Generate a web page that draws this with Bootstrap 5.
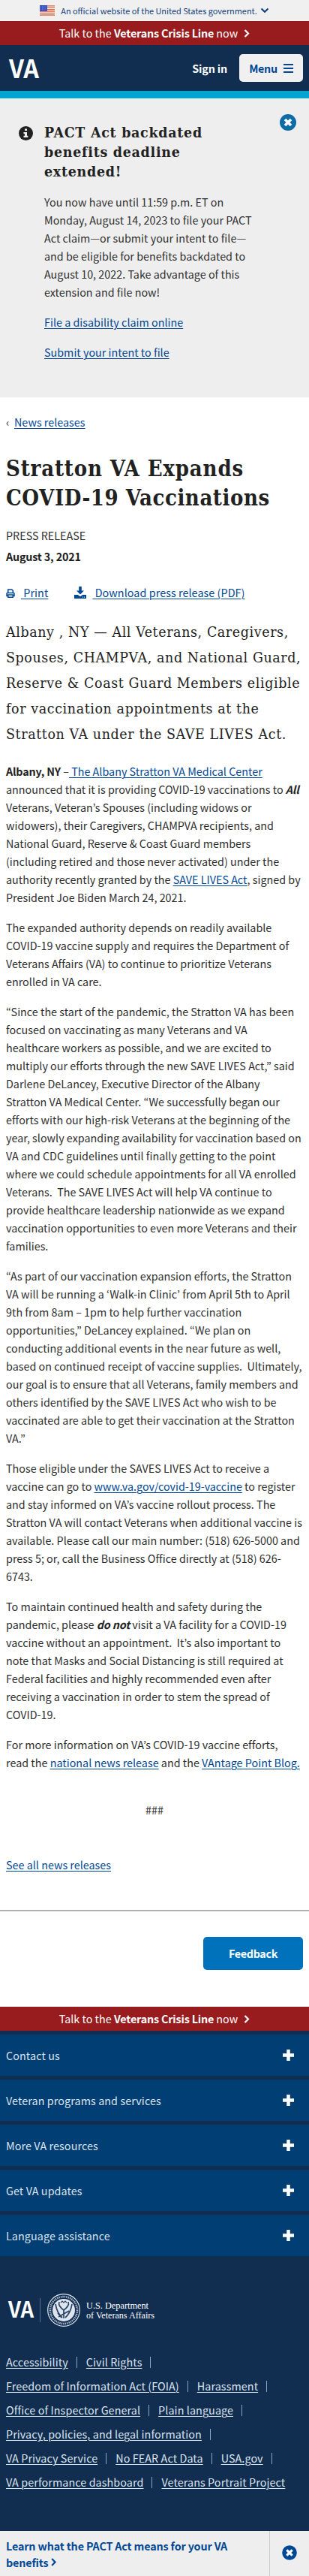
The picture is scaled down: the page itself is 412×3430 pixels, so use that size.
<!DOCTYPE html>
<html lang="en">
<head>
<meta charset="utf-8">
<meta name="viewport" content="width=device-width, initial-scale=1">
<title>Stratton VA Expands COVID-19 Vaccinations</title>
<link href="https://cdn.jsdelivr.net/npm/bootstrap@5.3.0/dist/css/bootstrap.min.css" rel="stylesheet">
<style>
body{font-family:"Noto Sans CJK KR","Noto Sans",sans-serif;font-size:14.32px;line-height:24px;letter-spacing:.02px;color:#2e2e2e;background:#fff;overflow-x:hidden}
a{color:#004795;text-decoration:underline;text-underline-offset:2px;text-decoration-thickness:1px}
svg{display:block;flex:none;overflow:visible;letter-spacing:0}
p{margin-bottom:16px}
strong{font-weight:700;color:#212121;letter-spacing:-.16px}
.slab{font-family:"DejaVu Serif Condensed","DejaVu Serif",serif;font-stretch:condensed;color:#212121}
.gov-bar{height:28px;background:#f0f0f0;font-size:10.9px;letter-spacing:0;color:#123e7c}
.crisis{height:32px;background:#981b1e;color:#fff}
.crisis strong{color:#fff}
.navy{background:#112e51}
.site-head{height:61px;padding:0 8px 0 12px}
.btn-menu{width:85px;height:37px;background:#f0f0f0;color:#004795;border-radius:5px;font-weight:700;letter-spacing:-.3px}
.cyan-rule{height:10px;background:#00a6d2}
.promo{background:#eee;height:398px;padding:33px 60px 0 25px}
.promo h2{font-size:19.4px;line-height:26px;letter-spacing:.74px;font-weight:700;margin:0 0 15px;white-space:nowrap}
.promo .info-dot{margin:4px 15px 0 0}
.promo .close-x{right:17px;top:21px}
.crumb{padding-top:21px}
.crumb-mark{width:11px}
.title{font-size:29px;line-height:39px;letter-spacing:.56px;font-weight:700;white-space:nowrap;margin:31px 0 0}
.title .first-line{letter-spacing:.85px}
.kicker{margin-top:18px}
.dateline{margin-top:4px}
.tools{margin-top:24px;letter-spacing:.08px}
.tools .print{margin:7px 8px 0 0}
.tools .dl{margin:4px 8px 0 35px}
.intro{font-size:19.4px;line-height:34px;letter-spacing:.62px;white-space:nowrap;margin:24px 0 20px}
.story{white-space:nowrap}
.hashes{margin-top:39px}
.see-all{margin-top:49px}
.rule{margin-top:48px;height:2px;background:#aeb0b5}
.feed{padding:34px 8px 49px}
.btn-feed{width:133px;height:44px;background:#0071bb;color:#fff;font-weight:700;letter-spacing:-.3px;border-radius:5px}
.acc-item{height:60px;border-top:5px solid #112e51;background:#003e73;color:#dce4ef;letter-spacing:.1px;padding:0 20px 0 8px}
.foot-logo{margin:50px 0 31px 11px}
.foot-links{line-height:32px;letter-spacing:.1px;padding:0 8px 49px}
.foot-links a{color:#dce4ef}
.foot-links .bar{width:1px;height:15px;background:#8ba6ca;margin:0 12px 0 11px}
.bottom-bar{height:60px;background:#eee;color:#004795;font-weight:700;letter-spacing:-.14px;line-height:21.6px}
.bottom-bar .learn{padding:9px 0 0 8px}
.bottom-bar .side{width:53px;border-left:1px solid #ccc;padding:19px 0 0 16px}
</style>
</head>
<body>
<header>
  <div class="gov-bar d-flex align-items-center justify-content-center">
    <svg width="20" height="14" viewBox="0 0 20 14"><rect width="20" height="14" fill="#fff"/><path d="M0 .8h20M0 3.200h20M0 5.600h20M0 8h20M0 10.400h20M0 13h20" stroke="#e0603c" stroke-width="1.3"/><rect width="10" height="8" fill="#2f49c0"/><path d="M1 2h8M1 4h8M1 6h8" stroke="#b9c4f3" stroke-width=".8" stroke-dasharray="1 1.2"/></svg>
    <span class="text-nowrap ms-2">An official website of the United States government.</span>
    <svg class="ms-1" width="12" height="8" viewBox="0 0 12 8"><path d="M1.500 1.500 6 5.800l4.500-4.300" fill="none" stroke="#123e7c" stroke-width="2.100"/></svg>
  </div>
  <div class="crisis d-flex align-items-center justify-content-center">
    <span>Talk to the <strong>Veterans Crisis Line</strong> now</span>
    <svg class="ms-2" width="8" height="12" viewBox="0 0 8 12"><path d="M1.500 2 6 6.500 1.500 11" fill="none" stroke="#fff" stroke-width="2.200"/></svg>
  </div>
  <div class="site-head navy d-flex align-items-center">
    <svg width="42" height="36" viewBox="0 0 42 36"><text x="0" y="30.500" font-size="33.700" font-weight="700" fill="#fff" textLength="40" lengthAdjust="spacingAndGlyphs">VA</text></svg>
    <strong class="text-white ms-auto me-3">Sign in</strong>
    <div class="btn-menu d-flex align-items-center justify-content-center">Menu
      <svg class="ms-2" width="13" height="12" viewBox="0 0 13 12"><path d="M0 1h13M0 6h13M0 11h13" stroke="#004795" stroke-width="2"/></svg>
    </div>
  </div>
  <div class="cyan-rule"></div>
</header>

<section class="promo d-flex position-relative">
  <svg class="info-dot" width="19" height="19" viewBox="0 0 19 19"><circle cx="9.500" cy="9.500" r="9.500" fill="#212121"/><path d="M8 3.500h3v2.500h-3zM6.500 8H11v4.800h1.300V15H6.500v-2.200H8v-2.600H6.500z" fill="#eee"/></svg>
  <div>
    <h2 class="slab">PACT Act backdated<br>benefits deadline<br>extended!</h2>
    <p class="text-nowrap">You now have until 11:59 p.m. ET on<br>Monday, August 14, 2023 to file your PACT<br>Act claim—or submit your intent to file—<br>and be eligible for benefits backdated to<br>August 10, 2022. Take advantage of this<br>extension and file now!</p>
    <p><a href="#">File a disability claim online</a></p>
    <p><a href="#">Submit your intent to file</a></p>
  </div>
  <svg class="close-x position-absolute" width="22" height="22" viewBox="0 0 22 22"><circle cx="11" cy="11" r="11" fill="#0d6ba8"/><path d="m7 7 8 8M15 7l-8 8" stroke="#fff" stroke-width="3.600"/></svg>
</section>

<main>
  <div class="px-2">
  <div class="crumb d-flex"><span class="crumb-mark">‹</span><a href="#">News releases</a></div>
  <h1 class="slab title"><span class="first-line">Stratton VA Expands</span><br>COVID-19 Vaccinations</h1>
  <div class="kicker">PRESS RELEASE</div>
  <div class="dateline"><strong>August 3, 2021</strong></div>
  <div class="tools d-flex">
    <svg class="print" width="12" height="12" viewBox="0 0 12 12"><path d="M2.800 5V1h5l1.500 1.500V5M1 9.500V6.300q0-.9.900-.9h8.200q.9 0 .9.900v3.200H9.200V8H2.800v1.500zM2.800 8v3.200h6.400V8" fill="none" stroke="#004795" stroke-width="1.500"/></svg>
    <a href="#">&nbsp;Print</a>
    <svg class="dl" width="16" height="16" viewBox="0 0 16 16"><path d="M6.200 0h3.600v5.500H13L8 10.500l-5-5h3.200zM0 11h4.800L8 13.200 11.200 11H16v5H0z" fill="#004795"/><path d="M11 14h1M13 14h1" stroke="#fff"/></svg>
    <a href="#">&nbsp;Download press release (PDF)</a>
  </div>
  <p class="slab intro">Albany , NY — All Veterans, Caregivers,<br>Spouses, CHAMPVA, and National Guard,<br>Reserve &amp; Coast Guard Members eligible<br>for vaccination appointments at the<br>Stratton VA under the SAVE LIVES Act.</p>
  <article class="story">
    <p><strong>Albany, NY</strong> –<a href="#">&nbsp;The Albany Stratton VA Medical Center</a><br>
    announced that it is providing COVID-19 vaccinations to <strong><em>All</em></strong><br>
    Veterans, Veteran’s Spouses (including widows or<br>
    widowers), their Caregivers, CHAMPVA recipients, and<br>
    National Guard, Reserve &amp; Coast Guard members<br>
    (including retired and those never activated) under the<br>
    authority recently granted by the <a href="#">SAVE LIVES Act</a>, signed by<br>
    President Joe Biden March 24, 2021.</p>
    <p>The expanded authority depends on readily available<br>
    COVID-19 vaccine supply and requires the Department of<br>
    Veterans Affairs (VA) to continue to prioritize Veterans<br>
    enrolled in VA care.</p>
    <p>“Since the start of the pandemic, the Stratton VA has been<br>
    focused on vaccinating as many Veterans and VA<br>
    healthcare workers as possible, and we are excited to<br>
    multiply our efforts through the new SAVE LIVES Act,” said<br>
    Darlene DeLancey, Executive Director of the Albany<br>
    Stratton VA Medical Center. “We successfully began our<br>
    efforts with our high-risk Veterans at the beginning of the<br>
    year, slowly expanding availability for vaccination based on<br>
    VA and CDC guidelines until finally getting to the point<br>
    where we could schedule appointments for all VA enrolled<br>
    Veterans.&nbsp; The SAVE LIVES Act will help VA continue to<br>
    provide healthcare leadership nationwide as we expand<br>
    vaccination opportunities to even more Veterans and their<br>
    families.</p>
    <p>“As part of our vaccination expansion efforts, the Stratton<br>
    VA will be running a ‘Walk-in Clinic’ from April 5th to April<br>
    9th from 8am – 1pm to help further vaccination<br>
    opportunities,” DeLancey explained. “We plan on<br>
    conducting additional events in the near future as well,<br>
    based on continued receipt of vaccine supplies.&nbsp; Ultimately,<br>
    our goal is to ensure that all Veterans, family members and<br>
    others identified by the SAVE LIVES Act who wish to be<br>
    vaccinated are able to get their vaccination at the Stratton<br>
    VA.”</p>
    <p>Those eligible under the SAVES LIVES Act to receive a<br>
    vaccine can go to <a href="#">www.va.gov/covid-19-vaccine</a> to register<br>
    and stay informed on VA’s vaccine rollout process. The<br>
    Stratton VA will contact Veterans when additional vaccine is<br>
    available. Please call our main number: (518) 626-5000 and<br>
    press 5; or, call the Business Office directly at (518) 626-<br>
    6743.</p>
    <p>To maintain continued health and safety during the<br>
    pandemic, please <strong><em>do not</em></strong> visit a VA facility for a COVID-19<br>
    vaccine without an appointment.&nbsp; It’s also important to<br>
    note that Masks and Social Distancing is still required at<br>
    Federal facilities and highly recommended even after<br>
    receiving a vaccination in order to stem the spread of<br>
    COVID-19.</p>
    <p class="mb-0">For more information on VA’s COVID-19 vaccine efforts,<br>
    read the <a href="#">national news release</a> and the <a href="#">VAntage Point Blog.</a></p>
  </article>
  <div class="text-center hashes">###</div>
  <div class="see-all"><a href="#">See all news releases</a></div>
  </div>
  <div class="rule"></div>
  <div class="feed d-flex justify-content-end"><div class="btn-feed d-flex align-items-center justify-content-center">Feedback</div></div>
</main>

<footer class="navy">
  <div class="crisis d-flex align-items-center justify-content-center">
    <span>Talk to the <strong>Veterans Crisis Line</strong> now</span>
    <svg class="ms-2" width="8" height="12" viewBox="0 0 8 12"><path d="M1.500 2 6 6.500 1.500 11" fill="none" stroke="#fff" stroke-width="2.200"/></svg>
  </div>
  <div class="acc-item d-flex align-items-center justify-content-between">Contact us<svg width="15" height="15" viewBox="0 0 15 15"><path d="M7.500 0v15M0 7.500h15" stroke="#fff" stroke-width="4.500"/></svg></div>
  <div class="acc-item d-flex align-items-center justify-content-between">Veteran programs and services<svg width="15" height="15" viewBox="0 0 15 15"><path d="M7.500 0v15M0 7.500h15" stroke="#fff" stroke-width="4.500"/></svg></div>
  <div class="acc-item d-flex align-items-center justify-content-between">More VA resources<svg width="15" height="15" viewBox="0 0 15 15"><path d="M7.500 0v15M0 7.500h15" stroke="#fff" stroke-width="4.500"/></svg></div>
  <div class="acc-item d-flex align-items-center justify-content-between">Get VA updates<svg width="15" height="15" viewBox="0 0 15 15"><path d="M7.500 0v15M0 7.500h15" stroke="#fff" stroke-width="4.500"/></svg></div>
  <div class="acc-item d-flex align-items-center justify-content-between">Language assistance<svg width="15" height="15" viewBox="0 0 15 15"><path d="M7.500 0v15M0 7.500h15" stroke="#fff" stroke-width="4.500"/></svg></div>
  <svg class="foot-logo" width="200" height="44" viewBox="0 0 200 44">
    <text x="0" y="32" font-size="29" font-weight="700" fill="#fff" textLength="34" lengthAdjust="spacingAndGlyphs">VA</text>
    <path d="M42.500 6v32" stroke="#5a6f8b"/>
    <circle cx="74" cy="22" r="15" fill="#dfe5ee"/>
    <g fill="none" stroke="#dfe5ee">
      <circle cx="74" cy="22" r="21.300" stroke-width="1.200"/>
      <circle cx="74" cy="22" r="18" stroke="#a9b6c8" stroke-width="2.600" stroke-dasharray="1.500 1"/>
      <path d="M63 14q2 12 9 18M85 14q-2 12-9 18M68 11q-2 5 6 11 8-6 6-11M74 22v11M67 31l14-8M66 26l5 6" stroke="#2b4566" stroke-width="1.700"/>
      <path d="M70 12l2-2 2 2 2-2 2 2" stroke="#2b4566" stroke-width="1.200"/>
    </g>
    <g font-family="Liberation Serif" font-size="11.500" fill="#fff"><text x="104" y="20" textLength="83" lengthAdjust="spacingAndGlyphs">U.S. Department</text><text x="104" y="32.500" textLength="91" lengthAdjust="spacingAndGlyphs">of Veterans Affairs</text></g>
  </svg>
  <nav class="foot-links text-nowrap">
    <div class="d-flex align-items-center"><a href="#">Accessibility</a><span class="bar"></span><a href="#">Civil Rights</a><span class="bar"></span></div>
    <div class="d-flex align-items-center"><a href="#">Freedom of Information Act (FOIA)</a><span class="bar"></span><a href="#">Harassment</a><span class="bar"></span></div>
    <div class="d-flex align-items-center"><a href="#">Office of Inspector General</a><span class="bar"></span><a href="#">Plain language</a><span class="bar"></span></div>
    <div class="d-flex align-items-center"><a href="#">Privacy, policies, and legal information</a><span class="bar"></span></div>
    <div class="d-flex align-items-center"><a href="#">VA Privacy Service</a><span class="bar"></span><a href="#">No FEAR Act Data</a><span class="bar"></span><a href="#">USA.gov</a><span class="bar"></span></div>
    <div class="d-flex align-items-center"><a href="#">VA performance dashboard</a><span class="bar"></span><a href="#">Veterans Portrait Project</a></div>
  </nav>
  <div class="bottom-bar d-flex justify-content-between">
    <div class="learn text-nowrap">Learn what the PACT Act means for your VA<br><span class="d-inline-flex align-items-center">benefits<svg class="ms-1" width="7" height="11" viewBox="0 0 7 11"><path d="M1.200 1 5.500 5.500 1.200 10" fill="none" stroke="#004795" stroke-width="2.200"/></svg></span></div>
    <div class="side"><svg width="20" height="20" viewBox="0 0 20 20"><circle cx="10" cy="10" r="9.800" fill="#004795"/><path d="m6.300 6.300 7.400 7.400M13.700 6.300l-7.400 7.400" stroke="#fff" stroke-width="3.200"/></svg></div>
  </div>
</footer>
<script src="https://cdn.jsdelivr.net/npm/bootstrap@5.3.0/dist/js/bootstrap.bundle.min.js"></script>
</body>
</html>
